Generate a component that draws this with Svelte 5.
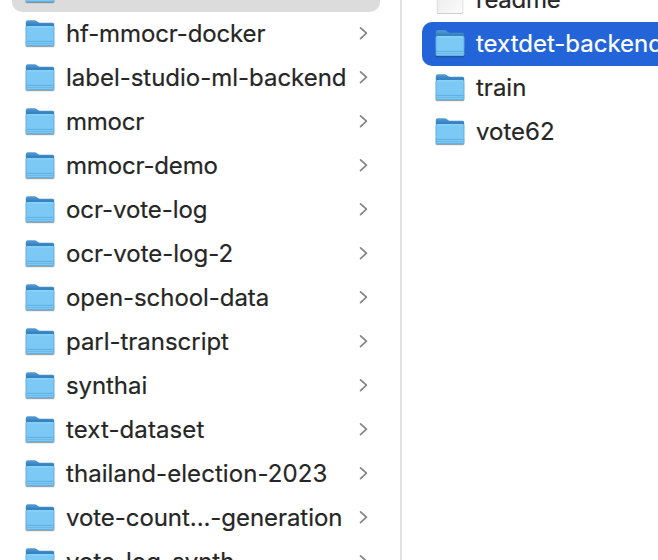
<script>
  const parents = [
    { name: '', selected: true },
    { name: 'hf-mmocr-docker', tracking: -0.12 },
    { name: 'label-studio-ml-backend', tracking: -0.02 },
    { name: 'mmocr', tracking: -0.25 },
    { name: 'mmocr-demo', tracking: -0.16 },
    { name: 'ocr-vote-log', tracking: -0.07 },
    { name: 'ocr-vote-log-2' },
    { name: 'open-school-data', tracking: -0.06 },
    { name: 'parl-transcript', tracking: -0.03 },
    { name: 'synthai', tracking: -0.08 },
    { name: 'text-dataset', tracking: 0.1 },
    { name: 'thailand-election-2023', tracking: 0.07 },
    { name: 'vote-count...-generation', tracking: -0.06 },
    { name: 'vote-log-synth' },
  ];
  const children = [
    { name: 'readme', file: true, tracking: -0.25 },
    { name: 'textdet-backend', selected: true },
    { name: 'train' },
    { name: 'vote62' },
  ];
</script>

{#snippet folder()}
  <svg class="icon" width="32" height="32" viewBox="0 0 32 32">
    <defs>
      <linearGradient id="back" x1="0" y1="0" x2="0" y2="1">
        <stop offset="0" stop-color="#559fd5" />
        <stop offset=".25" stop-color="#3583c2" />
        <stop offset="1" stop-color="#3583c2" />
      </linearGradient>
      <linearGradient id="front" x1="0" y1="0" x2="0" y2="1">
        <stop offset="0" stop-color="#8dd3f8" />
        <stop offset=".12" stop-color="#7dc9f5" />
        <stop offset="1" stop-color="#7bc8f6" />
      </linearGradient>
    </defs>
    <rect x="1.2" y="20" width="29.4" height="9.6" rx="1.6" fill="#000" opacity=".13" />
    <rect x="1.8" y="20" width="28.4" height="8.9" rx="1.5" fill="#173e5c" opacity=".35" />
    <path d="M1.8 4.2Q1.8 2.2 3.8 2.2H10.5Q11.8 2.2 12.7 3L14 4.1Q14.7 4.7 15.8 4.7H28.4Q30.2 4.7 30.2 6.5V20H1.8Z" fill="url(#back)" />
    <path d="M1.8 9.8Q1.8 8 3.6 8H28.4Q30.2 8 30.2 9.8V26.6Q30.2 28 28.8 28H3.2Q1.8 28 1.8 26.6Z" fill="url(#front)" />
    <path d="M2 23.4H30" stroke="#5eacdc" stroke-width=".9" />
    <path d="M2 25.5H30" stroke="#65b3e2" stroke-width=".7" />
    <path d="M2.3 27.6H29.7" stroke="#57a3d2" stroke-width=".7" />
    <path d="M2.2 9V27.4M29.8 9V27.4" stroke="#60b0de" stroke-width=".7" />
  </svg>
{/snippet}

{#snippet page()}
  <svg class="icon" width="32" height="32" viewBox="0 0 32 32">
    <defs>
      <linearGradient id="paper" x1="0" y1="0" x2="1" y2="1">
        <stop offset=".4" stop-color="#f0f0f0" />
        <stop offset="1" stop-color="#fcfcfc" />
      </linearGradient>
    </defs>
    <rect x="2.8" y="1" width="26.4" height="29.1" rx="1.8" fill="#cfcfcf" />
    <rect x="3.4" y="1" width="25.2" height="28" rx="1.3" fill="url(#paper)" />
  </svg>
{/snippet}

<div class="browser">
  <section class="column left">
    {#each parents as item}
      <div class="row" class:current={item.selected}>
        {@render folder()}
        <span class="name" style:letter-spacing="{item.tracking ?? 0}px">{item.name}</span>
        {#if !item.selected}
          <svg class="chevron" width="10" height="16" viewBox="0 0 10 16">
            <path d="M1.5 1.8L7.4 7.2L1.5 12.6" />
          </svg>
        {/if}
      </div>
    {/each}
  </section>
  <section class="column right">
    {#each children as item}
      <div class="row" class:active={item.selected}>
        {#if item.file}{@render page()}{:else}{@render folder()}{/if}
        <span class="name" style:letter-spacing="{item.tracking ?? 0}px">{item.name}</span>
      </div>
    {/each}
  </section>
</div>

<style>
  :global(body) {
    background: #fff;
  }
  .browser {
    display: flex;
    width: 658px;
    height: 560px;
    overflow: hidden;
    background: #fff;
    color: #262626;
    font: 24px/44px Inter, 'Liberation Sans', sans-serif;
  }
  .column {
    box-sizing: border-box;
    flex: none;
    height: 700px;
  }
  .left {
    width: 402px;
    margin-top: -32px;
    padding: 0 20px 0 12px;
    border-right: 2px solid #e2e2e2;
  }
  .right {
    width: 300px;
    margin-top: -22px;
    padding-left: 20px;
  }
  .row {
    box-sizing: border-box;
    display: flex;
    align-items: center;
    height: 44px;
    padding: 0 11px 0 12px;
    border-radius: 10px;
    white-space: nowrap;
  }
  .current {
    background: #dcdcdc;
  }
  .active {
    background: #2464d9;
    color: #fff;
  }
  .icon {
    flex: none;
    margin-right: 10px;
  }
  .name {
    flex: 1;
    -webkit-text-stroke: 0.2px currentColor;
  }
  .chevron {
    flex: none;
  }
  .chevron path {
    fill: none;
    stroke: #858585;
    stroke-width: 1.7;
    stroke-linecap: round;
    stroke-linejoin: round;
  }
</style>
